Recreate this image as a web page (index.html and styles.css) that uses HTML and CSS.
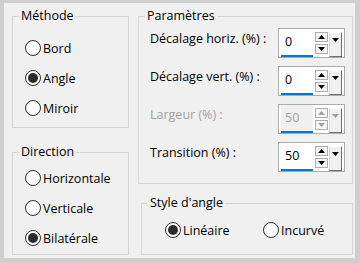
FILE: index.html
```html
<!DOCTYPE html>
<html lang="fr">
<head>
    <meta charset="UTF-8">
    <title>Angle</title>
    <link rel="stylesheet" href="styles.css">
</head>
<body>
    <div class="dialog">
        <div class="column">
            <fieldset class="group">
                <legend>Méthode</legend>
                <div class="options method">
                    <div class="option"><span class="radio"></span>Bord</div>
                    <div class="option"><span class="radio checked"></span>Angle</div>
                    <div class="option"><span class="radio"></span>Miroir</div>
                </div>
            </fieldset>
            <fieldset class="group direction">
                <legend>Direction</legend>
                <div class="options dir">
                    <div class="option"><span class="radio"></span>Horizontale</div>
                    <div class="option"><span class="radio"></span>Verticale</div>
                    <div class="option"><span class="radio checked"></span>Bilatérale</div>
                </div>
            </fieldset>
        </div>

        <div class="column">
            <fieldset class="group">
                <legend>Paramètres</legend>
                <div class="params">
                    <div class="field-row">
                        <span class="label">Décalage horiz. (%) :</span>
                        <div class="spin">
                            <div class="value">0</div>
                            <div class="arrows"><span class="arrow up"></span><span class="arrow down"></span></div>
                            <span class="drop"></span>
                        </div>
                    </div>
                    <div class="field-row">
                        <span class="label">Décalage vert. (%) :</span>
                        <div class="spin">
                            <div class="value">0</div>
                            <div class="arrows"><span class="arrow up"></span><span class="arrow down"></span></div>
                            <span class="drop"></span>
                        </div>
                    </div>
                    <div class="field-row disabled">
                        <span class="label">Largeur (%) :</span>
                        <div class="spin">
                            <div class="value">50</div>
                            <div class="arrows"><span class="arrow up"></span><span class="arrow down"></span></div>
                            <span class="drop"></span>
                        </div>
                    </div>
                    <div class="field-row">
                        <span class="label">Transition (%) :</span>
                        <div class="spin">
                            <div class="value">50</div>
                            <div class="arrows"><span class="arrow up"></span><span class="arrow down"></span></div>
                            <span class="drop"></span>
                        </div>
                    </div>
                </div>
            </fieldset>
            <fieldset class="group corner">
                <legend>Style d'angle</legend>
                <div class="inline">
                    <div class="option"><span class="radio checked"></span>Linéaire</div>
                    <div class="option"><span class="radio"></span>Incurvé</div>
                </div>
            </fieldset>
        </div>
    </div>
</body>
</html>
```

FILE: styles.css
```css
body {
    margin: 0;
    padding: 3px 5px 5px 4px;
    height: 263px;
    box-sizing: border-box;
    background-color: #cfcfcf;
    font-family: "Open Sans", sans-serif;
    font-size: 12.5px;
    color: #000;
}
.dialog {
    height: 255px;
    box-sizing: border-box;
    background-color: #f0f0f0;
    display: grid;
    grid-template-columns: 117px 215px;
    column-gap: 9px;
    align-items: start;
    padding: 5px 0 0 8px;
}
.column {
    display: flex;
    flex-direction: column;
}
.group {
    margin: 0;
    padding: 0;
    min-width: 0;
    border: 1px solid #d5d5d5;
}
.group legend {
    margin-left: 6px;
    padding: 0 2px;
    line-height: 16px;
}
.direction {
    margin-top: 16px;
}
.corner {
    margin: 11px 0 0 3px;
}
.method {
    padding: 9px 0 4px 12px;
}
.dir {
    padding: 3px 0 1px 12px;
}
.option {
    display: flex;
    align-items: center;
    gap: 2px;
    height: 30px;
}
.radio {
    width: 16px;
    height: 16px;
    box-sizing: border-box;
    border: 1px solid #2b2b2b;
    border-radius: 50%;
    background-color: #fff;
    display: flex;
    align-items: center;
    justify-content: center;
}
.radio.checked::after {
    content: "";
    width: 10px;
    height: 10px;
    border-radius: 50%;
    background-color: #2b2b2b;
}
.inline {
    display: grid;
    grid-template-columns: 98px auto;
    padding: 4px 0 9px 23px;
}

/* spin boxes */
.params {
    padding: 4px 7px 11px 11px;
}
.field-row {
    display: flex;
    justify-content: space-between;
    align-items: flex-start;
}
.field-row + .field-row {
    margin-top: 8px;
}
.label {
    padding-top: 2px;
}
.spin {
    width: 67px;
    height: 30px;
    box-sizing: border-box;
    border: 1px solid #acacac;
    background-color: #fff;
    display: flex;
}
.value {
    width: 32px;
    margin: 0 2px;
    box-sizing: border-box;
    padding: 5px 0 0 4px;
    line-height: 16px;
    border-bottom: 2px solid #0078d7;
}
.arrows {
    width: 13px;
    display: flex;
    flex-direction: column;
    gap: 2px;
    padding-top: 3px;
}
.arrow {
    height: 10px;
    box-sizing: border-box;
    border: 1px solid #adadad;
    background-color: #f7f7f7;
    display: flex;
    align-items: center;
    justify-content: center;
}
.arrow::before,
.drop::before {
    content: "";
    width: 7px;
    height: 4px;
    background-color: #000;
}
.up::before {
    clip-path: polygon(50% 0, 100% 100%, 0 100%);
}
.down::before,
.drop::before {
    clip-path: polygon(0 0, 100% 0, 50% 100%);
}
.drop {
    width: 13px;
    height: 25px;
    margin: 3px 2px 0 1px;
    box-sizing: border-box;
    padding-top: 5px;
    border: 1px solid;
    border-color: #fff #6e6e6e #6e6e6e #dadada;
    background-color: #f0f0f0;
    display: flex;
    justify-content: center;
}
.disabled .label,
.disabled .value {
    color: #a0a0a0;
}
.disabled .value {
    background-color: #f0f0f0;
}
.disabled .arrow::before,
.disabled .drop::before {
    background-color: #a0a0a0;
}
```
